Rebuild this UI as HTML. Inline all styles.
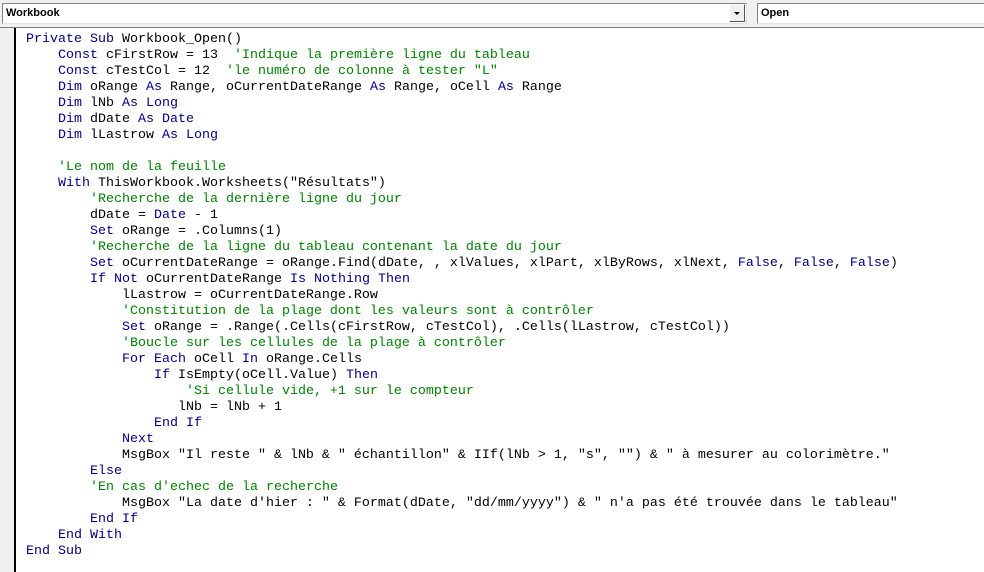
<!DOCTYPE html>
<html><head><meta charset="utf-8"><style>
body{margin:0;width:984px;height:572px;overflow:hidden;background:#fff;position:relative;font-family:"Liberation Sans",sans-serif}
#bar{position:absolute;left:0;top:0;width:984px;height:27px;background:#f0f0f0;border-bottom:1px solid #7a7a7a}
.cb{position:absolute;top:3px;height:19px;background:#fff;border:1px solid #828282;border-right-color:#e3e3e3;border-bottom-color:#e3e3e3;font-size:11px;font-weight:bold;line-height:19px;padding-left:3px;box-sizing:content-box}
#btn{position:absolute;left:729px;top:4px;width:16px;height:18px;background:#f0f0f0;border:1px solid #fff;border-right-color:#555;border-bottom-color:#555;box-sizing:border-box}
#btn:after{content:"";position:absolute;left:4px;top:7px;border-left:3px solid transparent;border-right:3px solid transparent;border-top:3px solid #000}
#margin{position:absolute;left:0;top:28px;width:14px;height:544px;background:#f0f0f0;border-right:2px solid #000}
pre{position:absolute;left:26px;top:32px;margin:0;font-family:"Liberation Mono",monospace;font-size:13.33px;line-height:16px;color:#000}
.k{color:#00007f}.c{color:#007f00}
</style></head><body>
<div id="bar">
<div class="cb" style="left:2px;width:740px">Workbook</div>
<div id="btn"></div>
<div class="cb" style="left:757px;width:230px">Open</div>
</div>
<div id="margin"></div>
<pre><span class="k">Private Sub</span> Workbook_Open()
    <span class="k">Const</span> cFirstRow = 13  <span class="c">'Indique la première ligne du tableau</span>
    <span class="k">Const</span> cTestCol = 12  <span class="c">'le numéro de colonne à tester "L"</span>
    <span class="k">Dim</span> oRange <span class="k">As</span> Range, oCurrentDateRange <span class="k">As</span> Range, oCell <span class="k">As</span> Range
    <span class="k">Dim</span> lNb <span class="k">As Long</span>
    <span class="k">Dim</span> dDate <span class="k">As Date</span>
    <span class="k">Dim</span> lLastrow <span class="k">As Long</span>

    <span class="c">'Le nom de la feuille</span>
    <span class="k">With</span> ThisWorkbook.Worksheets("Résultats")
        <span class="c">'Recherche de la dernière ligne du jour</span>
        dDate = <span class="k">Date</span> - 1
        <span class="k">Set</span> oRange = .Columns(1)
        <span class="c">'Recherche de la ligne du tableau contenant la date du jour</span>
        <span class="k">Set</span> oCurrentDateRange = oRange.Find(dDate, , xlValues, xlPart, xlByRows, xlNext, <span class="k">False</span>, <span class="k">False</span>, <span class="k">False</span>)
        <span class="k">If Not</span> oCurrentDateRange <span class="k">Is Nothing Then</span>
            lLastrow = oCurrentDateRange.Row
            <span class="c">'Constitution de la plage dont les valeurs sont à contrôler</span>
            <span class="k">Set</span> oRange = .Range(.Cells(cFirstRow, cTestCol), .Cells(lLastrow, cTestCol))
            <span class="c">'Boucle sur les cellules de la plage à contrôler</span>
            <span class="k">For Each</span> oCell <span class="k">In</span> oRange.Cells
                <span class="k">If</span> IsEmpty(oCell.Value) <span class="k">Then</span>
                    <span class="c">'Si cellule vide, +1 sur le compteur</span>
                   lNb = lNb + 1
                <span class="k">End If</span>
            <span class="k">Next</span>
            MsgBox "Il reste " &amp; lNb &amp; " échantillon" &amp; IIf(lNb &gt; 1, "s", "") &amp; " à mesurer au colorimètre."
        <span class="k">Else</span>
        <span class="c">'En cas d'echec de la recherche</span>
            MsgBox "La date d'hier : " &amp; Format(dDate, "dd/mm/yyyy") &amp; " n'a pas été trouvée dans le tableau"
        <span class="k">End If</span>
    <span class="k">End With</span>
<span class="k">End Sub</span></pre>
</body></html>
